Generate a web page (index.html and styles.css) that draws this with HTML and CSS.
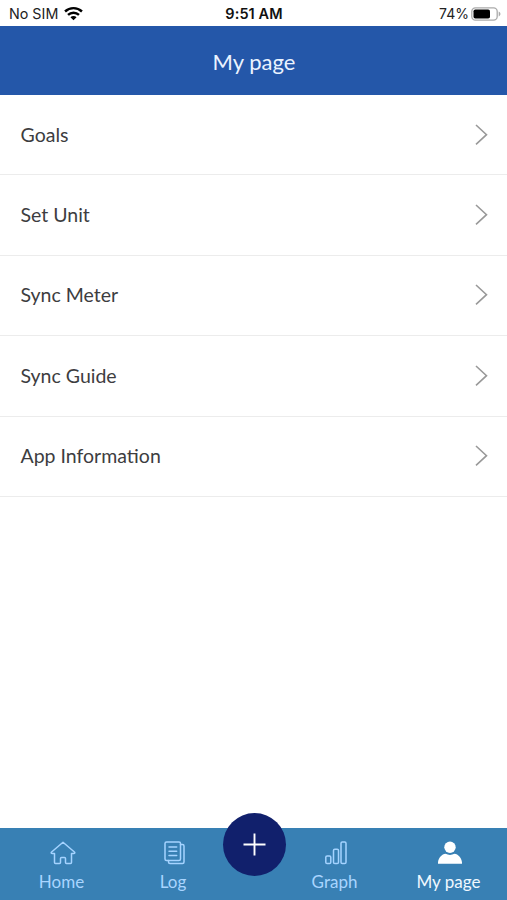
FILE: index.html
```html
<!DOCTYPE html>
<html lang="en">
<head>
<meta charset="utf-8">
<title>My page</title>
<link rel="stylesheet" href="styles.css">
</head>
<body>
<div class="status">
  <div class="carrier"><span class="sim">No SIM</span>
    <svg width="19" height="15" viewBox="0 0 18 14" fill="none" stroke="#000" stroke-width="2.3"><path d="M1 5.1a11.7 11.7 0 0 1 16 0"/><path d="M3.8 8.3a7.6 7.6 0 0 1 10.4 0"/><path d="M9 13.5 6.1 10.6a4.1 4.1 0 0 1 5.8 0z" fill="#000" stroke="none"/></svg>
  </div>
  <span class="time">9:51 AM</span>
  <div class="power"><span class="percent">74%</span>
    <svg width="30" height="14" viewBox="0 0 30 14"><rect x=".8" y=".8" width="25.4" height="12.4" rx="3.6" fill="#fff" stroke="#aaa" stroke-width="1.3"/><rect x="2.5" y="2.5" width="16.5" height="9" rx="1.8"/><path d="M27.7 4.6c2.3.8 2.3 4 0 4.8z" fill="#aaa"/></svg>
  </div>
</div>
<header class="header"><h1 class="title">My page</h1></header>
<main class="list">
  <a class="row"><span class="label">Goals</span><svg class="chevron" viewBox="0 0 14 22"><path d="M2 1 12.500 10.700 2 20.400"/></svg></a>
  <a class="row"><span class="label">Set Unit</span><svg class="chevron" viewBox="0 0 14 22"><path d="M2 1 12.500 10.700 2 20.400"/></svg></a>
  <a class="row"><span class="label">Sync Meter</span><svg class="chevron" viewBox="0 0 14 22"><path d="M2 1 12.500 10.700 2 20.400"/></svg></a>
  <a class="row"><span class="label">Sync Guide</span><svg class="chevron" viewBox="0 0 14 22"><path d="M2 1 12.500 10.700 2 20.400"/></svg></a>
  <a class="row"><span class="label">App Information</span><svg class="chevron" viewBox="0 0 14 22"><path d="M2 1 12.500 10.700 2 20.400"/></svg></a>
</main>
<nav class="tabs">
  <a class="tab home"><svg class="icon" width="26" height="24" viewBox="0 0 26 24"><path d="M13 1.200 1.300 11.200Q.8 12.500 2.200 12.500H4.500V21.500Q4.500 22.500 5.500 22.500H9.500Q10.500 22.500 10.500 21.500V17.500Q10.500 16.500 11.500 16.500H14.500Q15.500 16.500 15.500 17.500V21.500Q15.500 22.500 16.500 22.500H20.500Q21.500 22.500 21.500 21.500V12.500H23.800Q25.200 12.500 24.700 11.200Z"/></svg><span class="name">Home</span></a>
  <a class="tab log"><svg class="icon" width="21" height="24" viewBox="0 0 21 24"><rect x="1" y="1" width="15.500" height="18.500" rx="1.500"/><path d="M16.500 3.500H18.500Q20 3.500 20 5V21Q20 22.500 18.500 22.500H6Q4.500 22.500 4.500 21V19.500M5 6H12.700M5 10.300H12.700M5 14.600H12.700"/></svg><span class="name">Log</span></a>
  <a class="add"><svg width="24" height="24" viewBox="0 0 24 24"><path d="M11.500 .5v22M.5 11.500h22" stroke="#fff" stroke-width="1.9"/></svg></a>
  <a class="tab graph"><svg class="icon" width="22" height="24" viewBox="0 0 22 24"><rect x=".8" y="15" width="5" height="7.500" rx="1.300"/><rect x="8.500" y="8.300" width="5" height="14.200" rx="1.300"/><rect x="16" y="1" width="5" height="21.500" rx="1.300"/></svg><span class="name">Graph</span></a>
  <a class="tab mine"><svg class="person" width="26" height="24" viewBox="0 0 26 24"><circle cx="13" cy="6.300" r="5.700"/><path d="M1 22.800V21.500C1.300 17 5 13 8.500 12.800Q13 15 17.500 12.800C21 13 24.700 17 25 21.500V22.800Z"/></svg><span class="name">My page</span></a>
</nav>
</body>
</html>
```
FILE: styles.css
```css
* { box-sizing: border-box; }
body {
  margin: 0;
  height: 900px;
  display: flex;
  flex-direction: column;
  background: #fff;
  color: #3d3d3f;
  font-family: Lato, sans-serif;
  overflow: hidden;
}
.status {
  height: 25.500px;
  flex: none;
  display: grid;
  grid-template-columns: 1fr auto 1fr;
  align-items: center;
  padding: 1.500px 6px 0 9px;
  font: 14.500px/20px Inter, sans-serif;
  color: #222;
}
.carrier, .power { display: flex; align-items: center; }
.carrier { gap: 6px; }
.power { justify-content: flex-end; gap: 2px; }
.sim { font-size: 14.300px; }
.percent { font-size: 14px; }
.time { font-size: 14.500px; font-weight: 600; letter-spacing: .1px; color: #111; margin-right: 2px; }
.header {
  height: 69.500px;
  flex: none;
  display: flex;
  align-items: center;
  justify-content: center;
  padding: 3px 0 0 1px;
  background: #2457a9;
}
.title { margin: 0; font-size: 22px; font-weight: 400; line-height: 28px; color: #eaf3ff; }
.list { flex: 1; }
.row {
  height: 80.400px;
  display: flex;
  align-items: center;
  justify-content: space-between;
  padding: 0 19px 0 20.500px;
  border-bottom: 1.500px solid #ececec;
}
.label { font-size: 19.500px; line-height: 24px; }
.chevron { width: 14px; height: 22px; fill: none; stroke: #999; stroke-width: 1.600; }
.tabs {
  height: 72px;
  flex: none;
  display: grid;
  grid-template-columns: 123px 100px 63px 97px 124px;
  background: #3880b4;
  color: #a9d5ff;
}
.tab { display: flex; flex-direction: column; align-items: center; padding-top: 13px; }
.home .icon { margin-left: 2px; }
.log .icon { margin-left: 2px; }
.graph .icon { margin-left: 3px; }
.mine { padding-left: 7px; color: #f0f8ff; }
.icon { fill: none; stroke: #a5d3ff; stroke-width: 1.500; stroke-linejoin: round; stroke-linecap: round; }
.person { fill: #fff; margin-left: 3px; }
.name { margin-top: 6px; font-size: 17px; line-height: 22px; }
.add {
  width: 63px;
  height: 63px;
  margin-top: -15px;
  display: flex;
  align-items: center;
  justify-content: center;
  border-radius: 50%;
  background: #11206c;
}
```
